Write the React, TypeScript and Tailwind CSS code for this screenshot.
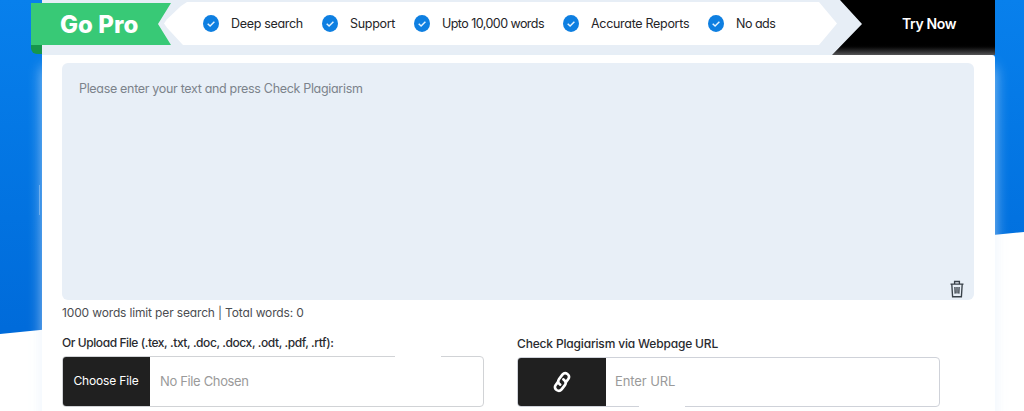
import React from "react";

const features = [
  { label: "Deep search", box: "w-[119px]", tracking: "tracking-[-0.32px]" },
  { label: "Support", box: "w-[92px]", tracking: "tracking-[-0.3px]" },
  { label: "Upto 10,000 words", box: "w-[149px]", tracking: "tracking-[-0.55px]" },
  { label: "Accurate Reports", box: "w-[145px]", tracking: "tracking-[-0.3px]" },
  { label: "No ads", box: "w-[90px]", tracking: "tracking-[-0.5px]" },
];

function CheckBadge() {
  return (
    <svg viewBox="0 0 16 17" className="h-[17px] w-4 shrink-0">
      <ellipse cx="8" cy="8.5" rx="8" ry="8.4" fill="#0e7fe1" />
      <path d="M4.7 8.7 7.1 11l4.3-4.2" fill="none" stroke="#e3f3ff" strokeWidth="1.5" />
    </svg>
  );
}

function TrashIcon() {
  return (
    <svg viewBox="0 0 14 18" className="h-[18px] w-3.5" fill="none" stroke="#394149" strokeWidth="1.35">
      <path d="M.5 4.1h13M4.6 3.8V1.5h4.8v2.3M1.8 4.3l.8 12.4h8.8l.8-12.4M4.9 7l.3 6.6M7 7v6.6M9.1 7l-.3 6.6" />
    </svg>
  );
}

function LinkIcon() {
  return (
    <svg viewBox="0 0 20 24" className="h-6 w-5" fill="none" stroke="#fff" strokeWidth="2.7" strokeLinecap="round">
      <path d="M8.2 14.6C5.7 13 5.7 10.8 7.1 9l3.3-4.3c1.3-1.5 3.4-1.8 5-.7 1.8 1.3 2.2 3.3.9 5l-2.2 2.9" />
      <path d="M11.4 9.4c2.5 1.6 2.9 3.9 1.5 5.7l-3.3 4.2c-1.3 1.6-3.4 1.8-5 .7-1.8-1.3-2.2-3.3-.9-5l2.2-2.9" />
    </svg>
  );
}

export default function App() {
  return (
    <div className="relative h-[411px] w-[1024px] overflow-hidden bg-white font-['Inter','Noto_Sans',sans-serif] [font-feature-settings:'cv11']">
      <div className="absolute inset-0 bg-linear-to-b from-[#0880ec] to-[#006bda] to-80% [clip-path:polygon(0_0,100%_0,100%_232px,0_334px)]" />
      <main className="relative ml-[42px] w-[953px]">
        <header className="flex h-[55px] bg-[#e7eef6]">
          <div className="-ml-[11px] w-[140px] shrink-0 pt-[3px]">
            <div className="flex h-[42px] items-center bg-[#38c976] pt-0.5 pl-[29px] text-[24px] font-extrabold tracking-[0.05px] text-white [clip-path:polygon(0_0,100%_0,127px_50%,100%_100%,0_100%)]">
              Go Pro
            </div>
            <div className="h-[9px] w-[11px] rounded-bl-[6px] bg-[#16964b]" />
          </div>
          <div className="-ml-[7px] mt-0.5 flex h-[43px] w-[673px] shrink-0 items-center bg-white pl-[39px] [clip-path:polygon(0_50%,3px_40%,17px_4px,23px_0,655px_0,100%_50%,655px_100%,19px_100%,3px_60%)]">
            {features.map((f) => (
              <div key={f.label} className={`flex shrink-0 items-center gap-3 text-[12.5px] text-[#252528] ${f.box}`}>
                <CheckBadge />
                <span className={`pt-0.5 whitespace-nowrap ${f.tracking}`}>{f.label}</span>
              </div>
            ))}
          </div>
          <button className="-ml-[5px] flex h-[55px] w-[163px] items-center bg-linear-to-b from-black from-80% to-[#555557] pb-2 pl-[70px] text-[14px] font-semibold tracking-[-0.35px] text-white [clip-path:polygon(8px_0,100%_0,100%_100%,0_100%,30px_24px)]">
            Try Now
          </button>
        </header>
        <section className="h-[370px] rounded-tr-[3px] bg-white px-5 pt-2 shadow-[0_12px_14px_rgba(225,238,252,0.65)]">
          <div className="relative h-[237px] w-[912px] rounded-[6px] bg-[#e8eff7] px-[17px] pt-[17px] text-[12.5px] leading-[18px] tracking-[-0.32px] text-[#7c838b]">
            Please enter your text and press Check Plagiarism
            <button aria-label="Clear text" className="absolute right-[10px] bottom-[2px]">
              <TrashIcon />
            </button>
          </div>
          <p className="mt-1 text-[12px] leading-[18px] tracking-[-0.15px] text-[#4b4d51]">
            1000 words limit per search | Total words: 0
          </p>
          <div className="mt-3 flex gap-[33px]">
            <div className="w-[422px]">
              <h2 className="h-[22px] text-[12px] leading-[18px] font-medium tracking-[-0.42px] text-[#292b2f]">
                Or Upload File (.tex, .txt, .doc, .docx, .odt, .pdf, .rtf):
              </h2>
              <div className="flex h-[51px] overflow-hidden rounded-[4px] border border-[#d1d3d6]">
                <div className="-my-px -ml-px flex w-[88px] items-center justify-center bg-[#202020] pb-px text-[12px] tracking-[-0.15px] text-white">
                  Choose File
                </div>
                <div className="flex items-center pl-[10px] text-[13px] tracking-[-0.35px] text-[#9a9a9a]">No File Chosen</div>
              </div>
            </div>
            <div className="w-[423px]">
              <h2 className="h-[23px] pt-px text-[12px] leading-[18px] font-medium tracking-[-0.17px] text-[#292b2f]">
                Check Plagiarism via Webpage URL
              </h2>
              <div className="flex h-[50px] overflow-hidden rounded-[4px] border border-[#cfd2d9]">
                <div className="-my-px -ml-px flex w-[89px] items-center justify-center bg-[#202020]">
                  <LinkIcon />
                </div>
                <div className="flex items-center pl-[9px] text-[13px] tracking-[-0.1px] text-[#9a9a9a]">Enter URL</div>
              </div>
            </div>
          </div>
        </section>
        <span className="absolute top-[355px] left-[353px] h-[3px] w-[46px] bg-white" />
        <span className="absolute top-[405px] left-[597px] h-[3px] w-[46px] bg-white" />
        <span className="absolute top-[185px] -left-[3px] h-[30px] w-px bg-white/30" />
      </main>
    </div>
  );
}
